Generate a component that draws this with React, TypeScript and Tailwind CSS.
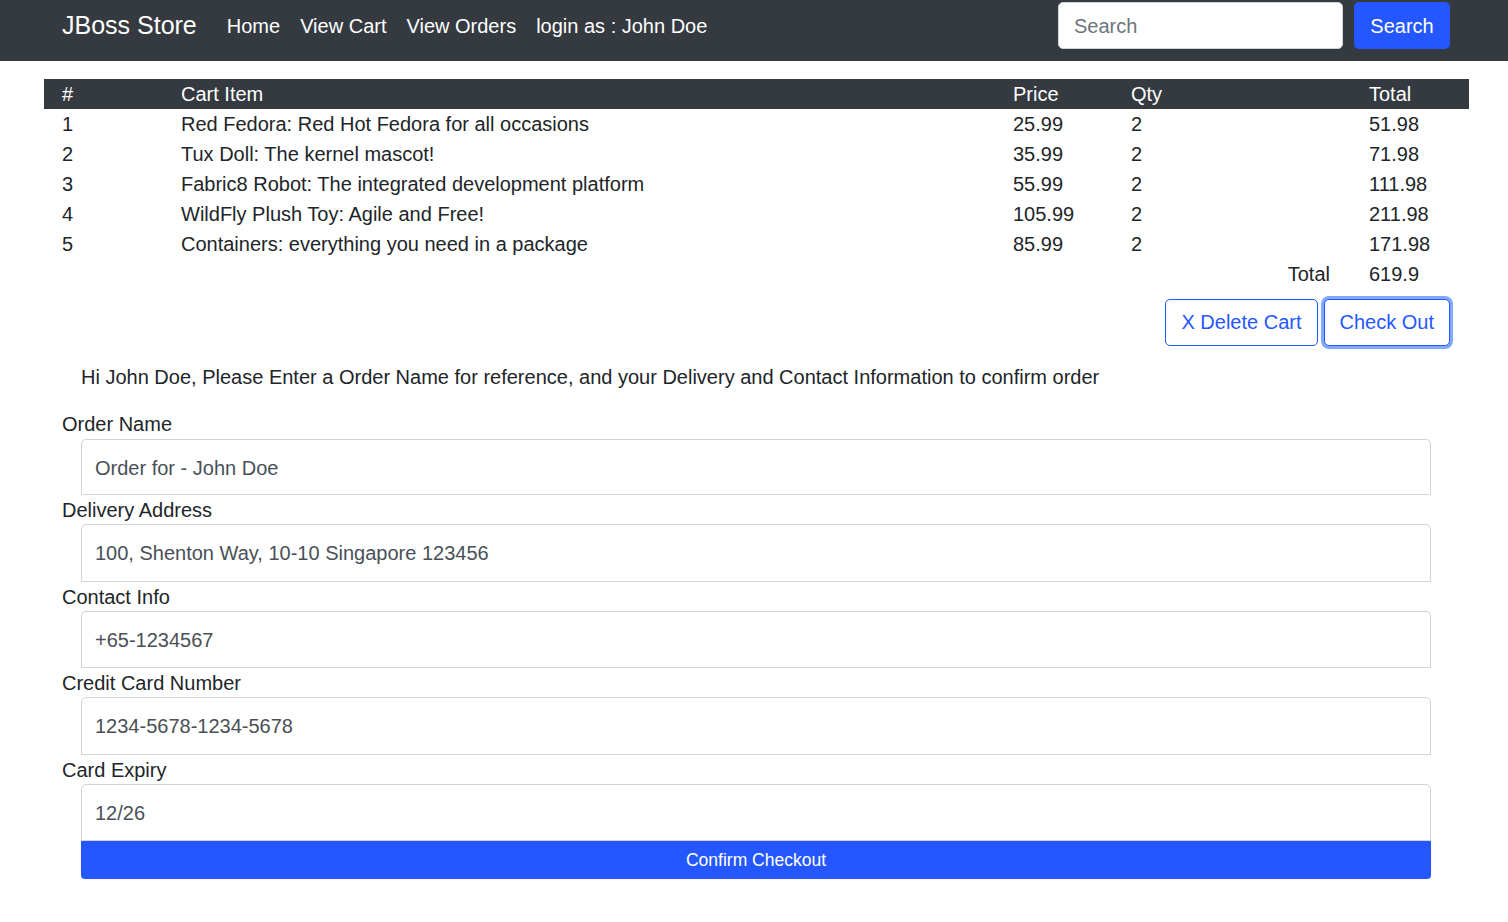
import React from 'react'

const items = [
  { id: 1, name: 'Red Fedora: Red Hot Fedora for all occasions', price: '25.99', qty: 2, total: '51.98' },
  { id: 2, name: 'Tux Doll: The kernel mascot!', price: '35.99', qty: 2, total: '71.98' },
  { id: 3, name: 'Fabric8 Robot: The integrated development platform', price: '55.99', qty: 2, total: '111.98' },
  { id: 4, name: 'WildFly Plush Toy: Agile and Free!', price: '105.99', qty: 2, total: '211.98' },
  { id: 5, name: 'Containers: everything you need in a package', price: '85.99', qty: 2, total: '171.98' },
]

const fields = [
  { label: 'Order Name', value: 'Order for - John Doe' },
  { label: 'Delivery Address', value: '100, Shenton Way, 10-10 Singapore 123456' },
  { label: 'Contact Info', value: '+65-1234567' },
  { label: 'Credit Card Number', value: '1234-5678-1234-5678' },
  { label: 'Card Expiry', value: '12/26' },
]

export default function App() {
  return (
    <div className="min-h-screen bg-white text-[20px] leading-[30px] text-[#212529] font-['Liberation_Sans',Arial,sans-serif]">
      {/* Navbar */}
      <nav className="h-[61px] bg-[#343a40] flex items-start pt-[2px]">
        <div className="flex items-center h-[47px] w-full">
          <a className="ml-[62px] text-[25px] leading-[37px] text-white mr-[20px]">JBoss Store</a>
          <div className="flex items-center">
            <a className="px-[10px] text-white">Home</a>
            <a className="px-[10px] text-white">View Cart</a>
            <a className="px-[10px] text-white">View Orders</a>
            <a className="px-[10px] text-white">login as : John Doe</a>
          </div>
          <div className="ml-auto mr-[58px] flex items-center gap-[11px]">
            <input
              placeholder="Search"
              className="w-[285px] h-[47px] rounded-[5px] border border-[#ced4da] bg-white px-[15px] pt-[1px] text-[20px] text-[#495057] placeholder:text-[#6c757d] outline-none"
            />
            <button className="w-[96px] h-[47px] rounded-[5px] bg-[#2457ff] text-white">Search</button>
          </div>
        </div>
      </nav>

      {/* Cart table */}
      <div className="mt-[18px] ml-[44px] w-[1425px]">
        <table className="w-full border-collapse">
          <colgroup>
            <col className="w-[119px]" />
            <col className="w-[832px]" />
            <col className="w-[118px]" />
            <col className="w-[238px]" />
            <col className="w-[118px]" />
          </colgroup>
          <thead>
            <tr className="bg-[#343a40] text-white h-[30px]">
              <th className="text-left font-normal pl-[18px]">#</th>
              <th className="text-left font-normal pl-[18px]">Cart Item</th>
              <th className="text-left font-normal pl-[18px]">Price</th>
              <th className="text-left font-normal pl-[18px]">Qty</th>
              <th className="text-left font-normal pl-[18px]">Total</th>
            </tr>
          </thead>
          <tbody>
            {items.map(it => (
              <tr key={it.id} className="h-[30px]">
                <td className="pl-[18px]">{it.id}</td>
                <td className="pl-[18px]">{it.name}</td>
                <td className="pl-[18px]">{it.price}</td>
                <td className="pl-[18px]">{it.qty}</td>
                <td className="pl-[18px]">{it.total}</td>
              </tr>
            ))}
            <tr className="h-[30px]">
              <td></td>
              <td></td>
              <td></td>
              <td className="text-right pr-[21px]">Total</td>
              <td className="pl-[18px]">619.9</td>
            </tr>
          </tbody>
        </table>
      </div>

      {/* Actions */}
      <div className="mt-[10px] flex justify-end gap-[6px] mr-[58px]">
        <button className="h-[47px] rounded-[5px] border border-[#2457ff] bg-white px-[15px] pb-[1px] text-[#2457ff]">
          X Delete Cart
        </button>
        <button className="h-[47px] rounded-[5px] border border-[#2457ff] bg-white px-[15px] pb-[1px] text-[#2457ff] shadow-[0_0_0_3px_#80a8ff]">
          Check Out
        </button>
      </div>

      {/* Checkout form */}
      <p className="mt-[16px] ml-[81px]">
        Hi John Doe, Please Enter a Order Name for reference, and your Delivery and Contact Information to confirm order
      </p>
      <div className="mt-[17px] ml-[62px] w-[1369px]">
        {fields.map((f, i) => (
          <div key={f.label}>
            <label className={`block ${i === 0 ? 'h-[30px]' : 'h-[29px]'}`}>{f.label}</label>
            <div className={`ml-[19px] ${i === 0 ? 'h-[56px]' : 'h-[57.5px]'} flex items-center rounded-t-[5px] border border-[#ced4da] px-[13px] pt-[1px] text-[#495057]`}>
              {f.value}
            </div>
          </div>
        ))}
        <button className="ml-[19px] w-[1350px] h-[38px] rounded-b-[4px] bg-[#2457ff] text-white text-[17.5px] leading-[26px]">
          Confirm Checkout
        </button>
      </div>
    </div>
  )
}
